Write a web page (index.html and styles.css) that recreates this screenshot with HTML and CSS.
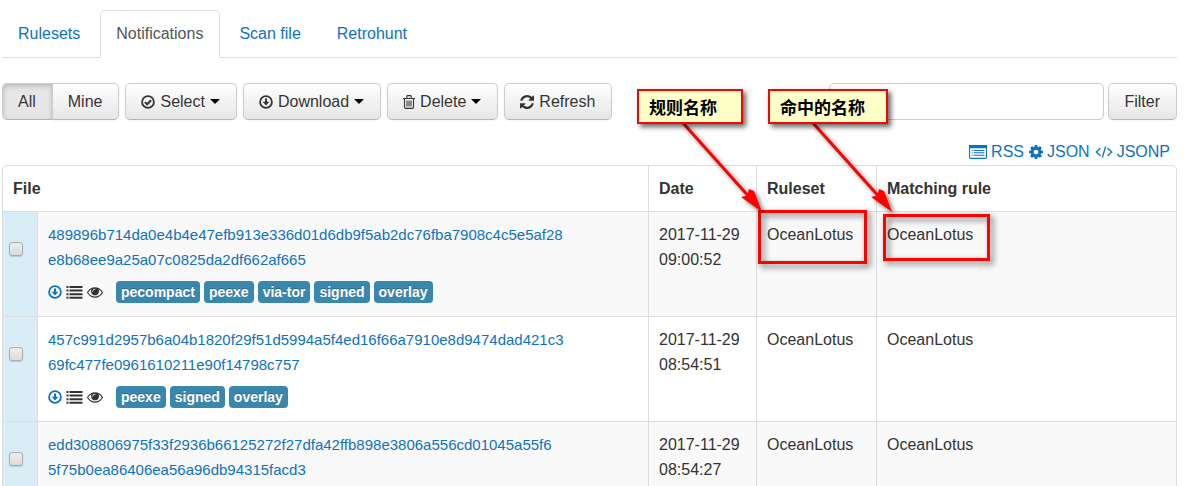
FILE: index.html
```html
<!DOCTYPE html>
<html lang="en">
<head>
<meta charset="utf-8">
<title>Notifications</title>
<link rel="stylesheet" href="styles.css">
</head>
<body>
<svg class="sprite" aria-hidden="true">
  <symbol id="i-check" viewBox="0 0 14 14"><circle cx="7" cy="7" r="5.9" fill="none" stroke="currentColor" stroke-width="1.8"/><path d="M3.9 7.1l2.2 2.2 4-4" fill="none" stroke="currentColor" stroke-width="2"/></symbol>
  <symbol id="i-down" viewBox="0 0 14 14"><circle cx="7" cy="7" r="5.9" fill="none" stroke="currentColor" stroke-width="1.8"/><path d="M6 3.4h2v3.4h2.4L7 10.5 3.6 6.8H6z" fill="currentColor"/></symbol>
  <symbol id="i-trash" viewBox="0 0 12 14"><path d="M0 3.5h12M3.800 3.300V1.500q0-.9.9-.9h2.600q.9 0 .9.9v1.800M1.500 3.500v8.600q0 1.300 1.200 1.300h6.600q1.200 0 1.200-1.300V3.500M4 5.500v6M6 5.500v6M8 5.500v6" fill="none" stroke="currentColor" stroke-width="1.1"/></symbol>
  <symbol id="i-refresh" viewBox="128 128 1536 1536"><path fill="currentColor" d="M1639 1056q0 5-1 7-64 268-268 434.500t-478 166.500q-146 0-282.500-55t-243.500-157l-129 129q-19 19-45 19t-45-19-19-45v-448q0-26 19-45t45-19h448q26 0 45 19t19 45-19 45l-137 137q71 66 161 102t187 36q134 0 250-65t186-179q11-17 53-117 8-23 30-23h192q13 0 22.500 9.500t9.500 22.500zm25-800v448q0 26-19 45t-45 19h-448q-26 0-45-19t-19-45 19-45l138-138q-148-137-349-137-134 0-250 65t-186 179q-11 17-53 117-8 23-30 23h-199q-13 0-22.500-9.500t-9.500-22.500v-7q65-268 270-434.500t480-166.500q146 0 284 55.500t245 156.500l130-129q19-19 45-19t45 19 19 45z"/></symbol>
  <symbol id="i-cog" viewBox="128 128 1536 1536"><path fill="currentColor" d="M1152 896q0-106-75-181t-181-75-181 75-75 181 75 181 181 75 181-75 75-181zm512-109v222q0 12-8 23t-20 13l-185 28q-19 54-39 91 35 50 107 138 10 12 10 25t-9 23q-27 37-99 108t-94 71q-12 0-26-9l-138-108q-44 23-91 38-16 136-29 186-7 28-36 28h-222q-14 0-24.500-8.500t-11.500-21.500l-28-184q-49-16-90-37l-141 107q-10 9-25 9-14 0-25-11-126-114-165-168-7-10-7-23 0-12 8-23 15-21 51-66.500t54-70.500q-27-50-41-99l-183-27q-13-2-21-12.500t-8-23.500v-222q0-12 8-23t19-13l186-28q14-46 39-92-40-57-107-138-10-12-10-24 0-10 9-23 26-36 98.500-107.500t94.500-71.500q13 0 26 10l138 107q44-23 91-38 16-136 29-186 7-28 36-28h222q14 0 24.500 8.500t11.500 21.500l28 184q49 16 90 37l142-107q9-9 24-9 13 0 25 10 129 119 165 170 7 8 7 22 0 12-8 23-15 21-51 66.500t-54 70.500q26 50 41 98l183 28q13 2 21 12.500t8 23.500z"/></symbol>
  <symbol id="i-eye" viewBox="0 384 1792 1152"><path fill="currentColor" d="M1664 960q-152-236-381-353 61 104 61 225 0 185-131.500 316.500t-316.500 131.500-316.500-131.500-131.500-316.500q0-121 61-225-229 117-381 353 133 205 333.500 326.500t434.500 121.500 434.500-121.500 333.500-326.500zm-720-384q0-20-14-34t-34-14q-125 0-214.500 89.500t-89.500 214.500q0 20 14 34t34 14 34-14 14-34q0-86 61-147t147-61q20 0 34-14t14-34zm848 384q0 34-20 69-140 230-376.500 368.500t-499.500 138.500-499.500-139-376.500-368q-20-35-20-69t20-69q140-229 376.500-368t499.500-139 499.500 139 376.500 368q20 35 20 69z"/></symbol>
  <symbol id="i-list" viewBox="0 0 16 13"><path fill="currentColor" d="M0 0h2v2H0zM3 0h13v2H3zM0 3.600h2v2H0zM3 3.600h13v2H3zM0 7.200h2v2H0zM3 7.200h13v2H3zM0 10.800h2v2H0zM3 10.800h13v2H3z"/></symbol>
  <symbol id="i-listalt" viewBox="0 0 17 13"><rect x=".5" y=".5" width="16" height="12" rx="1" fill="none" stroke="currentColor"/><path fill="currentColor" d="M0 0h17v3H0zM2.500 4.500h1v1h-1zM4.500 4.500h10v1h-10zM2.500 6.700h1v1h-1zM4.500 6.700h10v1h-10zM2.500 9h1v1h-1zM4.500 9h10v1h-10z"/></symbol>
  <symbol id="i-code" viewBox="0 0 18 14"><path d="M5.500 3L1.300 7l4.200 4M12.500 3l4.200 4-4.200 4M10.600 1.500L7.400 12.500" fill="none" stroke="currentColor" stroke-width="1.300"/></symbol>
</svg>

<main class="page">
  <nav class="tabs">
    <a class="tab" href="#">Rulesets</a>
    <a class="tab active" href="#" aria-current="page">Notifications</a>
    <a class="tab" href="#">Scan file</a>
    <a class="tab" href="#">Retrohunt</a>
  </nav>

  <form class="toolbar">
    <div class="group">
      <button class="btn pressed" type="button">All</button>
      <button class="btn" type="button">Mine</button>
    </div>
    <button class="btn" type="button"><svg class="icon"><use href="#i-check"/></svg>Select<span class="caret"></span></button>
    <button class="btn" type="button"><svg class="icon"><use href="#i-down"/></svg>Download<span class="caret"></span></button>
    <button class="btn" type="button"><svg class="icon trash"><use href="#i-trash"/></svg>Delete<span class="caret"></span></button>
    <button class="btn" type="button"><svg class="icon"><use href="#i-refresh"/></svg>Refresh</button>
    <div class="filter">
      <input class="field" type="text" aria-label="Filter notifications">
      <button class="btn" type="button">Filter</button>
    </div>
  </form>

  <div class="feeds">
    <a href="#"><svg class="icon wide"><use href="#i-listalt"/></svg>RSS</a>
    <a href="#"><svg class="icon"><use href="#i-cog"/></svg>JSON</a>
    <a href="#"><svg class="icon wide"><use href="#i-code"/></svg>JSONP</a>
  </div>

  <table class="grid">
    <colgroup><col class="c-pick"><col><col class="c-date"><col class="c-ruleset"><col class="c-rule"></colgroup>
    <thead>
      <tr><th colspan="2">File</th><th>Date</th><th>Ruleset</th><th>Matching rule</th></tr>
    </thead>
    <tbody>
      <tr>
        <td class="pick"><input type="checkbox" class="check" aria-label="Select file 489896b7"></td>
        <td>
          <a class="hash" href="#">489896b714da0e4b4e47efb913e336d01d6db9f5ab2dc76fba7908c4c5e5af28<br>e8b68ee9a25a07c0825da2df662af665</a>
          <div class="meta">
            <a href="#" aria-label="Download"><svg class="icon"><use href="#i-down"/></svg></a>
            <svg class="icon list"><use href="#i-list"/></svg>
            <svg class="icon eye"><use href="#i-eye"/></svg>
            <div class="labels"><span class="label">pecompact</span><span class="label">peexe</span><span class="label">via-tor</span><span class="label">signed</span><span class="label">overlay</span></div>
          </div>
        </td>
        <td>2017-11-29 09:00:52</td><td>OceanLotus</td><td>OceanLotus</td>
      </tr>
      <tr>
        <td class="pick"><input type="checkbox" class="check" aria-label="Select file 457c991d"></td>
        <td>
          <a class="hash" href="#">457c991d2957b6a04b1820f29f51d5994a5f4ed16f66a7910e8d9474dad421c3<br>69fc477fe0961610211e90f14798c757</a>
          <div class="meta">
            <a href="#" aria-label="Download"><svg class="icon"><use href="#i-down"/></svg></a>
            <svg class="icon list"><use href="#i-list"/></svg>
            <svg class="icon eye"><use href="#i-eye"/></svg>
            <div class="labels"><span class="label">peexe</span><span class="label">signed</span><span class="label">overlay</span></div>
          </div>
        </td>
        <td>2017-11-29 08:54:51</td><td>OceanLotus</td><td>OceanLotus</td>
      </tr>
      <tr>
        <td class="pick"><input type="checkbox" class="check" aria-label="Select file edd30880"></td>
        <td><a class="hash" href="#">edd308806975f33f2936b66125272f27dfa42ffb898e3806a556cd01045a55f6<br>5f75b0ea86406ea56a96db94315facd3</a></td>
        <td>2017-11-29 08:54:27</td><td>OceanLotus</td><td>OceanLotus</td>
      </tr>
    </tbody>
  </table>

  <div class="notes">
    <div class="frame frame-ruleset"></div>
    <div class="frame frame-rule"></div>
    <svg class="arrows" viewBox="0 0 300 130" aria-hidden="true">
      <g fill="red" stroke="red">
        <path d="M53 3L121 79" stroke-width="3"/><path d="M132 92l-21-15 6-1.500 2-6.500 5 2z" stroke="none"/>
        <path d="M183 3L251 79" stroke-width="3"/><path d="M262 92l-21-15 6-1.500 2-6.500 5 2z" stroke="none"/>
      </g>
    </svg>
    <div class="note note-ruleset" lang="zh">规则名称</div>
    <div class="note note-rule" lang="zh">命中的名称</div>
  </div>
</main>
</body>
</html>
```

FILE: styles.css
```css
* { box-sizing: border-box; }
body {
  margin: 0;
  background: #fff;
  color: #333;
  font: 16px/25px "Liberation Sans", Arial, sans-serif;
}
a { color: #0f72be; text-decoration: none; }
.sprite { display: none; }
.page {
  position: relative;
  height: 100vh;
  overflow: hidden;
  padding: 10px 12px 0 2px;
}

.tabs {
  display: flex;
  gap: 3px;
  border-bottom: 1px solid #ddd;
}
.tab {
  margin-bottom: -1px;
  padding: 10px 16px 11px 15px;
  border: 1px solid transparent;
  border-radius: 5px 5px 0 0;
}
.tab.active {
  color: #555;
  background: #fff;
  border-color: #ddd #ddd #fff;
}

.toolbar {
  display: flex;
  gap: 6px;
  margin-top: 25px;
}
.group { display: flex; }
.btn {
  display: flex;
  align-items: center;
  flex: none;
  padding: 5px 16px 5px 15px;
  border: 1px solid #ccc;
  border-bottom-color: #b3b3b3;
  border-radius: 5px;
  background: linear-gradient(#fff, #e6e6e6);
  box-shadow: 0 1px 2px rgba(0, 0, 0, .05);
  color: #333;
  font: inherit;
  text-shadow: 0 1px 1px rgba(255, 255, 255, .75);
}
.group .btn:first-child { border-radius: 5px 0 0 5px; }
.group .btn:last-child { border-radius: 0 5px 5px 0; margin-left: -1px; }
.btn.pressed {
  background: #e6e6e6;
  box-shadow: inset 0 2px 5px rgba(0, 0, 0, .2);
}
.icon { flex: none; width: 14px; height: 14px; }
.icon.trash { width: 12px; }
.btn .icon { margin-right: 5px; }
.caret {
  margin-left: 5px;
  border: 5px solid transparent;
  border-top-color: #000;
  border-bottom: 0;
}
.filter { display: flex; gap: 4px; margin-left: auto; }
.field {
  width: 275px;
  padding: 5px 8px;
  border: 1px solid #ccc;
  border-radius: 5px;
  font: inherit;
}

.feeds {
  display: flex;
  justify-content: flex-end;
  gap: 5px;
  margin-top: 19px;
  padding-right: 7px;
}
.feeds a { display: flex; align-items: center; gap: 4px; }
.icon.wide { width: 18px; }

.grid {
  width: 100%;
  margin-top: 1px;
  table-layout: fixed;
  border: 1px solid #ddd;
  border-radius: 5px;
  border-spacing: 0;
}
.c-pick { width: 34px; }
.c-date { width: 108px; }
.c-ruleset { width: 120px; }
.c-rule { width: 300px; }
th, td {
  padding: 10px;
  text-align: left;
  vertical-align: top;
  border-left: 1px solid #ddd;
}
td { border-top: 1px solid #ddd; }
th:first-child, td:first-child { border-left: 0; }
tbody tr:nth-child(odd) td { background: #f9f9f9; }
tbody tr .pick.pick { padding: 30px 6px 0; background: #d9edf7; }
.check {
  display: block;
  appearance: none;
  width: 14px;
  height: 14px;
  margin: 0;
  border: 1px solid #aaa;
  border-radius: 3px;
  background: linear-gradient(#eee, #dcdcdc);
  box-shadow: 0 1px 1px rgba(0, 0, 0, .15);
}
.hash { font-size: 15px; }

.meta {
  display: flex;
  align-items: center;
  gap: 4px;
  margin: 8px 0 2px;
  height: 24px;
}
.meta a { display: flex; }
.icon.list { width: 17px; height: 13px; }
.icon.eye { width: 16px; height: 11px; }
.labels { display: flex; gap: 4px; margin-left: 9px; }
.label {
  padding: 0 5px;
  border-radius: 4px;
  background: #3a87ad;
  color: #fff;
  font-size: 14px;
  font-weight: bold;
  line-height: 22px;
  text-shadow: 0 -1px 0 rgba(0, 0, 0, .25);
}

/* Annotations drawn over the table */
.note, .frame, .arrows { position: absolute; }
.note {
  top: 89px;
  height: 35px;
  padding: 3px 10px;
  border: 2px solid red;
  background: #ffffc8;
  box-shadow: 3px 3px 5px rgba(0, 0, 0, .6);
  color: #000;
  font: bold 17px/25px "Noto Sans CJK SC", sans-serif;
}
.note-ruleset { left: 637px; width: 106px; }
.note-rule { left: 768px; width: 120px; }
.frame {
  border: 3px solid red;
  filter: drop-shadow(3px 3px 3px rgba(0, 0, 0, .6));
}
.frame-ruleset { left: 758px; top: 210px; width: 109px; height: 54px; }
.frame-rule { left: 883px; top: 214px; width: 107px; height: 47px; }
.arrows {
  left: 630px;
  top: 120px;
  width: 300px;
  height: 130px;
  filter: drop-shadow(3px 3px 2px rgba(0, 0, 0, .5));
}
```
